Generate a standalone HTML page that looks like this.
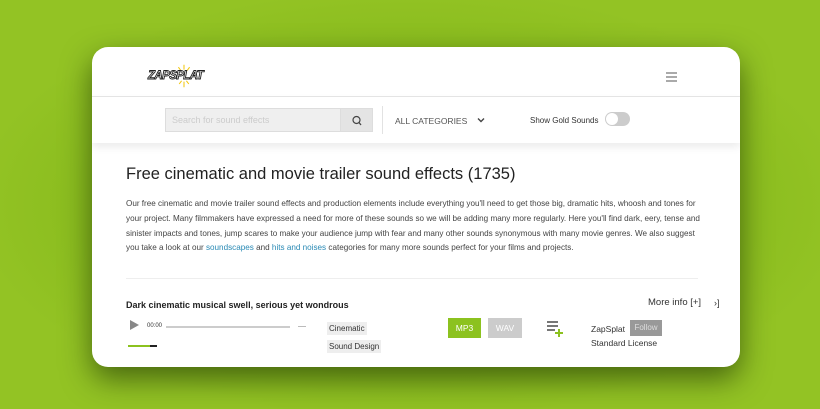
<!DOCTYPE html>
<html><head><meta charset="utf-8">
<style>
*{margin:0;padding:0;box-sizing:border-box}
body{width:820px;height:409px;overflow:hidden;font-family:"Liberation Sans",sans-serif;background:radial-gradient(ellipse at 50% 50%,#6f9a14 0%,#86b91c 45%,#93c324 75%);position:relative}
.card{position:absolute;left:92px;top:47px;width:648px;height:320px;background:#fff;border-radius:16px;overflow:hidden;box-shadow:0 12px 30px rgba(20,40,0,.6)}
.hdr{height:50px;border-bottom:1px solid #e6e6e6;position:relative}
.logo{position:absolute;left:56px;top:23px;font-weight:900;font-size:11.5px;letter-spacing:-0.6px;color:#fff;-webkit-text-stroke:0.9px #222;font-style:italic}
.burst{position:absolute;left:84px;top:17px;width:16px;height:24px}
.ham{position:absolute;left:574px;top:25px;width:11px}
.ham i{display:block;height:1.5px;background:#aaa;margin-bottom:2.5px}
.bar{height:46px;position:relative;box-shadow:0 4px 8px rgba(0,0,0,.08)}
.search{position:absolute;left:73px;top:11px;width:176px;height:24px;background:#efefef;border:1px solid #ddd;font-size:9px;color:#ccc;padding:6px 6px}
.sbtn{position:absolute;left:248px;top:11px;width:33px;height:24px;background:#e4e4e4;border:1px solid #ddd}
.sep{position:absolute;left:290px;top:9px;width:1px;height:28px;background:#e2e2e2}
.main{position:absolute;left:34px;top:118px;width:584px}
h1{font-weight:normal;font-size:16.5px;color:#222;margin-top:0}
p{font-size:8.15px;line-height:14.8px;color:#444;margin-top:13px}
a{color:#2a8ab5;text-decoration:none}
.hr{position:absolute;left:34px;top:231px;width:572px;height:1px;background:#eee}
.t{position:absolute;font-size:8px;color:#333;white-space:nowrap}
.chip{position:absolute;font-size:8px;color:#333;background:#eee;padding:2px 2px}
</style></head><body>
<div class="card">
 <div class="hdr">
  <svg class="burst" viewBox="0 0 20 28"><g stroke="#f2c60e" stroke-width="1.3"><line x1="10" y1="0" x2="10" y2="6"/><line x1="3" y1="3" x2="6" y2="7"/><line x1="17" y1="3" x2="14" y2="7"/><line x1="10" y1="21" x2="10" y2="28"/><line x1="4" y1="24" x2="7" y2="20"/><line x1="16" y1="24" x2="13" y2="20"/></g></svg>
  <div class="logo">ZAPSPLAT</div>
  <div class="ham"><i></i><i></i><i></i></div>
 </div>
 <div class="bar">
  <div class="search">Search for sound effects</div>
  <div class="sbtn"><svg width="33" height="24" viewBox="0 0 33 24"><circle cx="15.5" cy="11" r="3.5" fill="none" stroke="#444" stroke-width="1.2"/><line x1="18" y1="13.5" x2="20" y2="16" stroke="#444" stroke-width="1.3"/></svg></div>
  <div class="sep"></div>
  <div class="t" style="left:303px;top:19px;font-size:8.5px;color:#555">ALL CATEGORIES</div>
  <svg style="position:absolute;left:385px;top:20px" width="8" height="6" viewBox="0 0 8 6"><path d="M1 1.5 L4 4.5 L7 1.5" fill="none" stroke="#444" stroke-width="1.4"/></svg>
  <div class="t" style="left:438px;top:19px;font-size:8px">Show Gold Sounds</div>
  <div style="position:absolute;left:513px;top:15px;width:25px;height:14px;border-radius:7px;background:#ccc"><div style="position:absolute;left:1px;top:1px;width:12px;height:12px;border-radius:6px;background:#fff"></div></div>
 </div>
 <div class="main">
  <h1>Free cinematic and movie trailer sound effects (1735)</h1>
  <p>Our free cinematic and movie trailer sound effects and production elements include everything you'll need to get those big, dramatic hits, whoosh and tones for your project. Many filmmakers have expressed a need for more of these sounds so we will be adding many more regularly. Here you'll find dark, eery, tense and sinister impacts and tones, jump scares to make your audience jump with fear and many other sounds synonymous with many movie genres. We also suggest you take a look at our <a>soundscapes</a> and <a>hits and noises</a> categories for many more sounds perfect for your films and projects.</p>
 </div>
 <div class="hr"></div>
 <div class="t" style="left:34px;top:253px;font-size:9px;font-weight:bold;color:#222">Dark cinematic musical swell, serious yet wondrous</div>
 <div class="t" style="left:556px;top:250px;font-size:9.5px">More info [+]</div>
 <div class="t" style="left:622px;top:251px;font-size:9px">›]</div>
 <svg style="position:absolute;left:38px;top:273px" width="9" height="10"><path d="M0 0 L9 5 L0 10Z" fill="#888"/></svg>
 <div class="t" style="left:55px;top:276px;font-size:6px">00:00</div>
 <div style="position:absolute;left:74px;top:279px;width:124px;height:1.5px;background:#ccc"></div>
 <div style="position:absolute;left:206px;top:279px;width:8px;height:1px;background:#bbb"></div>
 <div style="position:absolute;left:36px;top:298px;width:24px;height:1.5px;background:#8cc21f"></div>
 <div style="position:absolute;left:58px;top:297.5px;width:7px;height:2px;background:#222"></div>
 <div class="chip" style="left:235px;top:275px">Cinematic</div>
 <div class="chip" style="left:235px;top:293px">Sound Design</div>
 <div style="position:absolute;left:356px;top:271px;width:33px;height:20px;background:#8cc21f;color:#fff;font-size:8.5px;text-align:center;line-height:20px">MP3</div>
 <div style="position:absolute;left:396px;top:271px;width:34px;height:20px;background:#ccc;color:#fff;font-size:8.5px;text-align:center;line-height:20px">WAV</div>
 <svg style="position:absolute;left:454px;top:273px" width="18" height="18" viewBox="0 0 18 18"><g stroke="#555" stroke-width="1.6"><line x1="1" y1="2" x2="12" y2="2"/><line x1="1" y1="6" x2="12" y2="6"/><line x1="1" y1="10" x2="9" y2="10"/></g><g stroke="#8cc21f" stroke-width="2"><line x1="13" y1="9" x2="13" y2="17"/><line x1="9" y1="13" x2="17" y2="13"/></g></svg>
 <div class="t" style="left:499px;top:277px;font-size:8.5px">ZapSplat</div>
 <div style="position:absolute;left:538px;top:273px;width:32px;height:16px;background:#999;color:#ddd;font-size:8px;text-align:center;line-height:16px">Follow</div>
 <div class="t" style="left:499px;top:291px;font-size:8.5px">Standard License</div>
</div>
</body></html>
